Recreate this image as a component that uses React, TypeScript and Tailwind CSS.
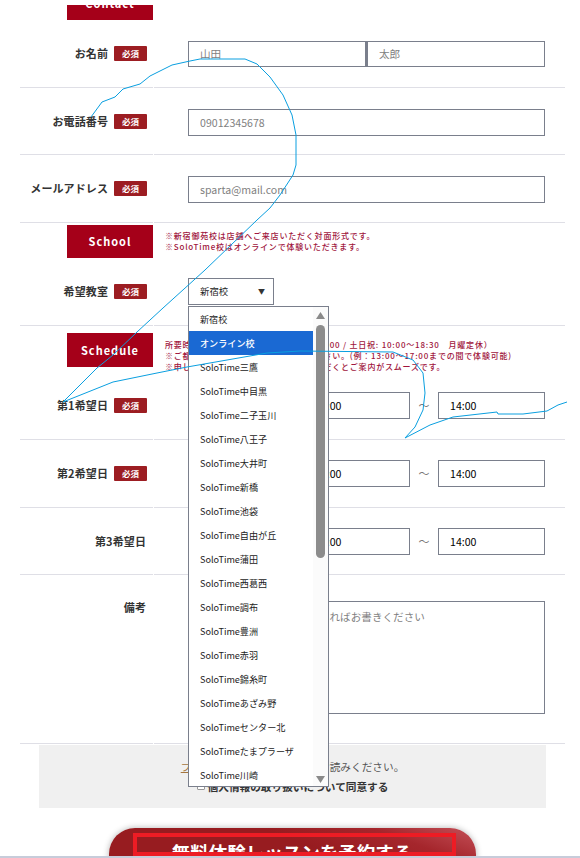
import React from "react";

const schools = ["新宿校","オンライン校","SoloTime三鷹","SoloTime中目黒","SoloTime二子玉川","SoloTime八王子","SoloTime大井町","SoloTime新橋","SoloTime池袋","SoloTime自由が丘","SoloTime蒲田","SoloTime西葛西","SoloTime調布","SoloTime豊洲","SoloTime赤羽","SoloTime錦糸町","SoloTimeあざみ野","SoloTimeセンター北","SoloTimeたまプラーザ","SoloTime川崎"];

function Badge() {
  return <span className="flex h-[15px] w-[33px] shrink-0 items-center justify-center rounded-[1px] bg-[#9c1d22] text-[8.5px] font-bold text-white">必須</span>;
}

function Row({ label, required, children, h = "h-[68px]", top = false }: { label: string; required?: boolean; children: React.ReactNode; h?: string; top?: boolean }) {
  return (
    <div className={`ml-[20px] flex w-[545px] ${h}`}>
      <div className={`flex w-[133px] justify-end gap-[6px] border-b border-[#dfdfe6] pr-[6px] ${top ? "items-start pt-[24px]" : "items-center"}`}>
        <span className={`text-[11px] font-bold tracking-[0.1px] text-[#333333] ${required ? "" : "pr-px"}`}>{label}</span>
        {required && <Badge />}
      </div>
      <div className={`ml-px flex flex-1 border-b border-[#dfdfe6] pl-[34px] ${top ? "items-start pt-[26px]" : "items-center"}`}>{children}</div>
    </div>
  );
}

function Field({ placeholder, className = "", value }: { placeholder?: string; className?: string; value?: string }) {
  return (
    <input
      readOnly
      placeholder={placeholder}
      value={value ?? ""}
      className={`h-full border border-[#7a7f8c] bg-white text-[10.6px] text-black outline-none placeholder:text-[#7f7f7f] ${className}`}
    />
  );
}

function TimeFields() {
  return (
    <div className="flex h-[27px] items-center pl-[116px]">
      <Field value="14:00" className="w-[106px] px-[10px]" />
      <span className="w-[28px] text-center text-[11px] text-[#777777]">〜</span>
      <Field value="14:00" className="w-[107px] px-[11px]" />
    </div>
  );
}

function SectionHead({ title, className = "", blockH = "h-[33px]", children }: { title: string; className?: string; blockH?: string; children: React.ReactNode }) {
  return (
    <div className={`ml-[67px] flex items-start ${className}`}>
      <div className={`flex ${blockH} w-[86px] shrink-0 items-center justify-center bg-[#a50019] text-[11px] font-bold tracking-[1px] text-white`}>{title}</div>
      <div className="ml-[12px] whitespace-nowrap text-[8px] font-medium leading-[11px] tracking-[0.8px] text-[#a0143c]">{children}</div>
    </div>
  );
}

function Dropdown() {
  return (
    <div className="absolute left-[188px] top-[306px] z-10 flex h-[481px] w-[141px] border border-[#7a7f8c] bg-white">
      <ul className="w-[124px]">
        {schools.map((s, i) => (
          <li key={s} className={`flex h-[24px] items-center pl-[11px] pt-px text-[9.1px] ${i === 1 ? "bg-[#1a69d3] font-medium text-white" : "text-[#222222]"}`}>{s}</li>
        ))}
      </ul>
      <div className="flex w-[15px] flex-col items-center bg-[#fbfbfb] pb-[3px] pt-[5px]">
        <svg width="9" height="7" viewBox="0 0 9 7"><path d="M4.5 0 9 7H0z" fill="#8a8a8a" /></svg>
        <div className="mt-[6px] h-[233px] w-[9px] rounded-[5px] bg-[#8c8c8c]" />
        <svg className="mt-auto" width="9" height="7" viewBox="0 0 9 7"><path d="M0 0h9L4.5 7z" fill="#8a8a8a" /></svg>
      </div>
    </div>
  );
}

function Ink() {
  return (
    <svg className="pointer-events-none absolute left-0 top-0 z-20" width="580" height="858" fill="none" stroke="#0a9fe0" strokeWidth="1">
      <polyline points="91,117 102,102 115,97 123,89 140,84 150,76 172,65 190,61 200,59 245,59 257,64 270,77 283,95 292,115 296,135 296,165 293,175 280,195 270,208 257,220 205,270 163,308 137,332 113,355 97,368 63,402 113,382 157,373 187,367 267,353 300,351 393,352 413,360 423,373 425,393 423,410 415,427 405,438 430,425 453,417 497,412 498,414 523,414 547,411 558,405 567,402" />
    </svg>
  );
}

export default function App() {
  return (
    <div className="relative h-[858px] w-[580px] overflow-hidden bg-white pt-[5px] font-['Noto_Sans_CJK_JP','Noto_Sans',sans-serif] text-[#333333]">
      <div className="h-[851px] overflow-hidden">
        <SectionHead title="Contact" className="mt-[-18px]">
          <div className="pt-[5px]">※必須情報</div>
        </SectionHead>
        <Row label="お名前" required>
          <div className="flex h-[26px]">
            <Field placeholder="山田" className="w-[178px] px-[11px]" />
            <Field placeholder="太郎" className="w-[179px] border-l-2 px-[11px]" />
          </div>
        </Row>
        <Row label="お電話番号" required h="h-[67px]">
          <div className="h-[27px]"><Field placeholder="09012345678" className="w-[357px] px-[11px]" /></div>
        </Row>
        <Row label="メールアドレス" required>
          <div className="h-[27px]"><Field placeholder="sparta@mail.com" className="w-[357px] px-[11px]" /></div>
        </Row>
        <SectionHead title="School" className="mt-[2px]">
          <div className="pt-[5px]">※新宿御苑校は店舗へご来店いただく対面形式です。</div>
          <div>※SoloTime校はオンラインで体験いただきます。</div>
        </SectionHead>
        <div className="-mt-[0px]">
          <Row label="希望教室" required>
            <div className="flex h-[27px] w-[86px] items-center justify-between border border-[#7a7f8c] bg-white pl-[11px] pr-[8px] text-[9.4px] text-[#222222]">
              <span>新宿校</span>
              <span className="text-[7px] text-[#333333]">▼</span>
            </div>
          </Row>
        </div>
        <SectionHead title="Schedule" className="mt-[7px]" blockH="h-[34px]">
          <div className="pt-[6px]">所要時間は60分です。（平日: 13:00〜20:00 / 土日祝: 10:00〜18:30　月曜定休）</div>
          <div>※ご都合の良い時間帯を必ずご記入ください。(例：13:00〜17:00までの間で体験可能)</div>
          <div>※申し込みの際は複数の日程を指定いただくとご案内がスムーズです。</div>
        </SectionHead>
        <Row label="第1希望日" required><TimeFields /></Row>
        <Row label="第2希望日" required><TimeFields /></Row>
        <Row label="第3希望日" h="h-[67px]"><TimeFields /></Row>
        <Row label="備考" h="h-[169px]" top>
          <textarea
            readOnly
            placeholder="ご質問やご要望などがあればお書きください"
            className="h-[113px] w-[357px] resize-none border border-[#7a7f8c] bg-white pl-[24px] pt-[7px] text-[10.6px] outline-none placeholder:text-[#7f7f7f]"
          />
        </Row>
        <div className="mx-[39px] mt-px flex h-[63px] w-[507px] flex-col items-center justify-center gap-[4px] bg-[#f0f0f0]">
          <p className="text-[10.67px] text-[#555555]"><a className="text-[#a5763f] underline">プライバシーポリシー</a>を必ずお読みください。</p>
          <label className="flex items-center gap-[3px] text-[10.67px] font-bold text-[#333333]">
            <span className="h-[7px] w-[8px] rounded-[1px] border border-[#999999] bg-white" />
            個人情報の取り扱いについて同意する
          </label>
        </div>
        <div className="ml-[109px] mt-[20px] h-[40px] w-[367px] rounded-t-[26px] bg-[linear-gradient(200deg,#c45058_0%,#a5262c_22%,#971c20_45%)] pt-[5px] shadow-[0_0_6px_rgba(0,0,0,0.3)]">
          <div className="ml-[24px] flex h-[23px] w-[323px] items-start justify-center overflow-hidden border-[4.5px] border-[#ed1c24] pr-[5px] pt-[5px] text-[18.5px] font-bold leading-[20px] text-white">
            <span className="whitespace-nowrap">無料体験レッスンを予約する</span>
          </div>
        </div>
      </div>
      <div className="h-[2px] bg-[#c7ccda]" />
      <Dropdown />
      <Ink />
    </div>
  );
}
